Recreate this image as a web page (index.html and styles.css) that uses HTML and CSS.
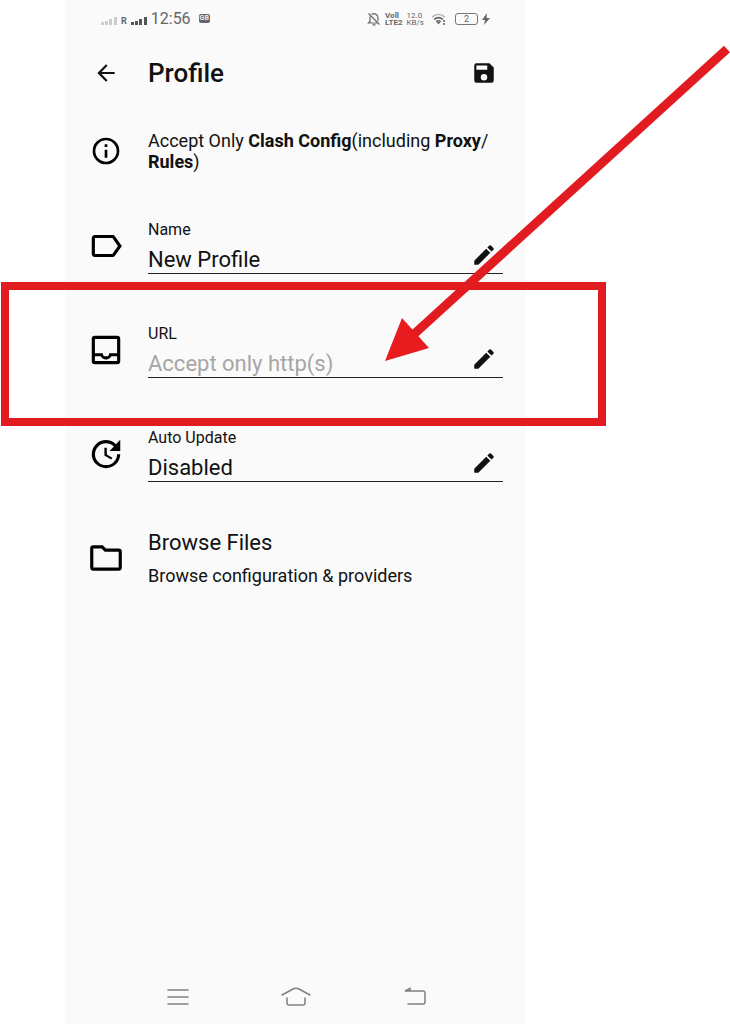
FILE: index.html
```html
<!DOCTYPE html>
<html lang="en">
<head>
  <meta charset="UTF-8">
  <meta name="viewport" content="width=device-width, initial-scale=1">
  <title>Profile</title>
  <link rel="stylesheet" href="styles.css">
</head>
<body>
  <div class="page">
    <div class="phone">
      <div class="status-bar">
        <svg class="signal faded" width="16" height="8" viewBox="0 0 16 8"><path d="M0 5h3v3H0zM4 4h3v4H4zM8 2h3v6H8zM13 0h3v8h-3z"/></svg>
        <span class="roaming">R</span>
        <svg class="signal" width="16" height="8" viewBox="0 0 16 8"><path d="M0 5h3v3H0zM4 4h3v4H4zM8 2h3v6H8zM13 0h3v8h-3z"/></svg>
        <span class="time">12:56</span>
        <span class="badge">GB</span>
        <div class="status-right">
          <svg width="14" height="14" viewBox="0 0 14 14" fill="none" stroke="currentColor" stroke-width="1.2"><path d="M1.500 1.500l11 11M3 4.500v5L1.500 11H10M4.500 2.500C7 .8 11 2 11 6v3M5.500 12.800h3"/></svg>
          <span class="tiny strong">Voll<br>LTE2</span>
          <span class="tiny">12.0<br>KB/s</span>
          <svg class="wifi" width="16" height="12" viewBox="0 0 16 12" fill="none" stroke="currentColor" stroke-width="1.6"><path d="M1 4.200c4-3.600 9-3.600 13 0" opacity=".45"/><path d="M3 6.500c3-2.600 6-2.600 9 0M5.200 8.700c1.500-1.200 3-1.200 4.500 0"/><path d="M5.500 9l2 2.500 2-2.500z" fill="currentColor" stroke="none"/><path d="M13 7v2M13 10v2"/></svg>
          <span class="battery">2</span>
          <svg width="8" height="12" viewBox="0 0 8 12" fill="currentColor"><path d="M5 0L0 7h3l-1 5 6-7H4.500z"/></svg>
        </div>
      </div>

      <header class="toolbar">
        <button class="icon-button back" aria-label="Back">
          <svg class="icon-small" viewBox="0 0 24 24"><path d="M20 11H7.830l5.590-5.590L12 4l-8 8 8 8 1.410-1.410L7.830 13H20v-2z"/></svg>
        </button>
        <h1>Profile</h1>
        <button class="icon-button" aria-label="Save">
          <svg class="icon-small" viewBox="0 0 24 24"><path d="M17 3H5a2 2 0 0 0-2 2v14a2 2 0 0 0 2 2h14a2 2 0 0 0 2-2V7l-4-4zm-5 16a3 3 0 1 1 0-6 3 3 0 0 1 0 6zm3-10H5V5h10v4z"/></svg>
        </button>
      </header>

      <main>
        <div class="row tip">
          <svg class="icon-info" viewBox="0 0 24 24"><path d="M11 7h2v2h-2zm0 4h2v6h-2zm1-9a10 10 0 1 0 0 20 10 10 0 0 0 0-20zm0 18a8 8 0 1 1 0-16 8 8 0 0 1 0 16z"/></svg>
          <p>Accept Only <b>Clash Config</b>(including <b>Proxy</b>/<wbr><b>Rules</b>)</p>
        </div>

        <div class="row">
          <svg class="icon" viewBox="0 0 24 24"><path d="M17.630 5.840C17.270 5.330 16.670 5 16 5L5 5.010C3.900 5.010 3 5.900 3 7v10c0 1.100.9 1.990 2 1.990L16 19c.67 0 1.270-.33 1.630-.84L22 12l-4.370-6.160zM16 17H5V7h11l3.550 5L16 17z"/></svg>
          <div class="field">
            <label for="name">Name</label>
            <div class="control">
              <input id="name" type="text" value="New Profile">
              <button class="icon-button" aria-label="Edit name">
                <svg class="icon-small" viewBox="0 0 24 24"><path d="M3 17.250V21h3.750L17.810 9.940l-3.750-3.750L3 17.250zM20.710 7.040a1 1 0 0 0 0-1.410l-2.340-2.340a1 1 0 0 0-1.410 0l-1.830 1.830 3.750 3.750 1.830-1.830z"/></svg>
              </button>
            </div>
          </div>
        </div>

        <div class="row">
          <svg class="icon" viewBox="0 0 24 24"><path d="M19 3H5a2 2 0 0 0-2 2v14a2 2 0 0 0 2 2h14a2 2 0 0 0 2-2V5a2 2 0 0 0-2-2zm0 16H5v-3h3.560c.69 1.190 1.970 2 3.450 2s2.750-.81 3.450-2H19v3zm0-5h-4.990a2 2 0 0 1-4 0H5V5h14v9z"/></svg>
          <div class="field">
            <label for="url">URL</label>
            <div class="control">
              <input id="url" type="url" placeholder="Accept only http(s)">
              <button class="icon-button" aria-label="Edit URL">
                <svg class="icon-small" viewBox="0 0 24 24"><path d="M3 17.250V21h3.750L17.810 9.940l-3.750-3.750L3 17.250zM20.710 7.040a1 1 0 0 0 0-1.410l-2.340-2.340a1 1 0 0 0-1.410 0l-1.830 1.830 3.750 3.750 1.830-1.830z"/></svg>
              </button>
            </div>
          </div>
        </div>

        <div class="row">
          <svg class="icon" viewBox="0 0 24 24"><path d="M21 10.120h-6.780l2.740-2.820c-2.730-2.700-7.150-2.800-9.880-.1-2.730 2.710-2.730 7.080 0 9.800 2.730 2.700 7.150 2.700 9.880 0C18.320 15.650 19 14.080 19 12.100h2c0 1.980-.88 4.550-2.640 6.290-3.510 3.480-9.210 3.480-12.720 0-3.500-3.470-3.530-9.110-.02-12.580 3.510-3.470 9.140-3.470 12.650 0L21 3v7.120zM12.500 8v4.250l3.500 2.080-.72 1.210L11 13V8h1.500z"/></svg>
          <div class="field">
            <label for="update">Auto Update</label>
            <div class="control">
              <input id="update" type="text" value="Disabled">
              <button class="icon-button" aria-label="Edit auto update">
                <svg class="icon-small" viewBox="0 0 24 24"><path d="M3 17.250V21h3.750L17.810 9.940l-3.750-3.750L3 17.250zM20.710 7.040a1 1 0 0 0 0-1.410l-2.340-2.340a1 1 0 0 0-1.410 0l-1.830 1.830 3.750 3.750 1.830-1.830z"/></svg>
              </button>
            </div>
          </div>
        </div>

        <a class="row" href="#files">
          <svg class="icon" viewBox="0 0 24 24"><path d="M9.170 6l2 2H20v10H4V6h5.170M10 4H4a2 2 0 0 0-2 2v12a2 2 0 0 0 2 2h16a2 2 0 0 0 2-2V8a2 2 0 0 0-2-2h-8l-2-2z"/></svg>
          <div class="browse">
            <span class="browse-title">Browse Files</span>
            <span class="browse-text">Browse configuration &amp; providers</span>
          </div>
        </a>
      </main>

      <nav class="nav-bar">
        <button aria-label="Recent apps">
          <svg width="32" height="22" viewBox="0 0 32 22"><path d="M7 4h20M7 11h20M7 18h20"/></svg>
        </button>
        <button aria-label="Home">
          <svg width="32" height="22" viewBox="0 0 32 22"><path d="M2 9L13 3q3-1.500 6 0l11 6M7 12v5q0 2 2 2h14q2 0 2-2v-5"/></svg>
        </button>
        <button aria-label="Back">
          <svg width="32" height="22" viewBox="0 0 32 22"><path d="M11 2.500L6 5h18q2 0 2 2v9q0 2-2 2H9M9 4l2-1.500V5"/></svg>
        </button>
      </nav>
    </div>

    <!-- highlight around the URL field -->
    <svg class="marker" viewBox="0 0 730 440" fill="none" stroke="#e11b1f">
      <rect x="5" y="286" width="597" height="136" stroke-width="8"/>
      <path d="M727 49L412 336" stroke-width="9"/>
      <path d="M385 361l17-43 27 30z" fill="#e81b1f" stroke="none"/>
    </svg>
  </div>
</body>
</html>
```
FILE: styles.css
```css
* {
  box-sizing: border-box;
}

body {
  margin: 0;
  background: #fff;
  color: #111;
  font-family: Roboto, sans-serif;
}

button {
  padding: 0;
  border: 0;
  background: none;
  color: inherit;
}

svg {
  display: block;
  flex: none;
}

.page {
  position: relative;
  display: grid;
  grid-template-columns: 65fr 460fr 205fr;
  min-height: 100vh;
}

.phone {
  grid-column: 2;
  display: flex;
  flex-direction: column;
  min-width: 0;
  background: #fafafa;
}

/* status bar */
.status-bar {
  display: flex;
  align-items: center;
  gap: 4px;
  height: 37px;
  padding: 0 35px 0 36px;
  color: #666;
}

.signal {
  margin-top: 5px;
  fill: #555;
}

.faded {
  fill: #ccc;
}

.roaming {
  margin-top: 5px;
  font-size: 9px;
  font-weight: 700;
}

.time {
  font-size: 16px;
}

.badge {
  margin-left: 4px;
  padding: 0 1px;
  border-radius: 2px;
  background: #666;
  color: #eee;
  font-size: 7px;
  font-weight: 700;
  line-height: 9px;
}

.status-right {
  display: flex;
  align-items: center;
  gap: 4px;
  margin-left: auto;
}

.tiny {
  font-size: 8px;
  line-height: 7px;
}

.strong {
  font-weight: 700;
}

.wifi {
  margin: 0 4px 0 3px;
}

.battery {
  width: 23px;
  border: 1px solid #777;
  border-radius: 3px;
  font-size: 9px;
  line-height: 10px;
  text-align: center;
}

/* toolbar */
.toolbar {
  display: flex;
  align-items: center;
  height: 71px;
  padding: 0 28px;
}

.back {
  margin-right: 29px;
}

h1 {
  flex: 1;
  margin: 0;
  font-size: 26px;
  font-weight: 500;
}

.icon-small {
  width: 26px;
  height: 26px;
  fill: currentColor;
}

/* settings rows */
.row {
  display: grid;
  grid-template-columns: 38px 1fr;
  align-items: center;
  gap: 23px;
  height: 104px;
  padding: 0 22px;
  color: inherit;
  text-decoration: none;
}

.tip {
  height: 86px;
}

.tip p {
  margin: 0;
  font-size: 18px;
  line-height: 21px;
}

.icon {
  width: 38px;
  height: 38px;
}

.icon-info {
  justify-self: center;
  width: 32px;
  height: 32px;
}

.field {
  padding-top: 2px;
}

.field label {
  display: block;
  font-size: 16px;
  line-height: 20px;
}

.control {
  display: flex;
  align-items: center;
  height: 34px;
  padding-right: 6px;
  border-bottom: 1px solid #222;
}

.control input {
  flex: 1;
  min-width: 0;
  padding: 6px 0 0;
  border: 0;
  outline: 0;
  background: none;
  color: inherit;
  font: 22px Roboto, sans-serif;
}

.control .icon-button {
  margin-bottom: 3px;
}

.control input::placeholder {
  color: #a6a6a6;
}

.browse {
  display: flex;
  flex-direction: column;
  gap: 7px;
}

.browse-title {
  font-size: 22px;
  line-height: 28px;
}

.browse-text {
  font-size: 18px;
  line-height: 24px;
}

/* system navigation */
.nav-bar {
  display: flex;
  align-items: center;
  height: 54px;
  margin-top: auto;
  padding: 0 51px 0 53px;
}

.nav-bar button {
  display: flex;
  flex: 1;
  justify-content: center;
}

.nav-bar svg {
  fill: none;
  stroke: #808080;
  stroke-width: 1.5;
  stroke-linecap: round;
}

.marker {
  position: absolute;
  top: 0;
  left: 0;
  width: 100%;
  pointer-events: none;
}
```
